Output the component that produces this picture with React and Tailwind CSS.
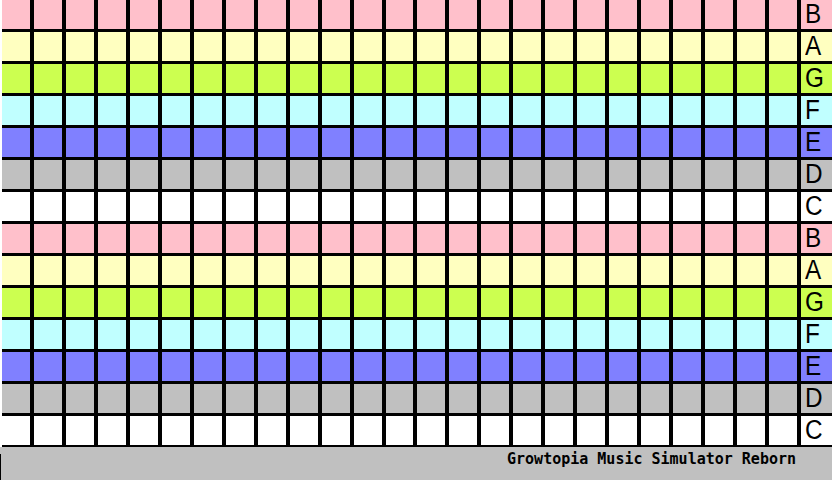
import React from 'react';

const NOTES = ['B', 'A', 'G', 'F', 'E', 'D', 'C', 'B', 'A', 'G', 'F', 'E', 'D', 'C'];

const ROW_BG = {
  B: 'bg-[#ffc0cb]',
  A: 'bg-[#ffffc0]',
  G: 'bg-[#ccff50]',
  F: 'bg-[#c0ffff]',
  E: 'bg-[#8080ff]',
  D: 'bg-[#c0c0c0]',
  C: 'bg-white',
};

const COLS = Array.from({ length: 25 }, (_, i) => i);

export default function App() {
  return (
    <div className="w-[832px] h-[480px] flex flex-col bg-[#c0c0c0] overflow-hidden">
      {/* Note grid */}
      <div className="h-[447px] bg-black border-l-2 border-white pb-[2px] grid grid-cols-[repeat(25,1fr)_31px] grid-rows-[repeat(14,1fr)] gap-x-[4px] gap-y-[3px]">
        {NOTES.map((note, r) => (
          <React.Fragment key={r}>
            {COLS.map((c) => (
              <div key={c} className={ROW_BG[note]} />
            ))}
            <div className={`${ROW_BG[note]} flex items-end pl-[4px] pb-[1px]`}>
              <span className="text-[27px] leading-none text-black font-['Liberation_Sans',sans-serif] scale-x-90 origin-left">
                {note}
              </span>
            </div>
          </React.Fragment>
        ))}
      </div>

      {/* Status bar */}
      <div className="flex-1 flex">
        <div className="w-px h-[26px] self-end bg-black" />
        <div className="flex-1 flex justify-end pr-[36px] pt-[3px]">
          <span className="text-[15px] leading-[18px] font-bold text-black font-['DejaVu_Sans_Mono',monospace]">
            Growtopia Music Simulator Reborn
          </span>
        </div>
      </div>
    </div>
  );
}
